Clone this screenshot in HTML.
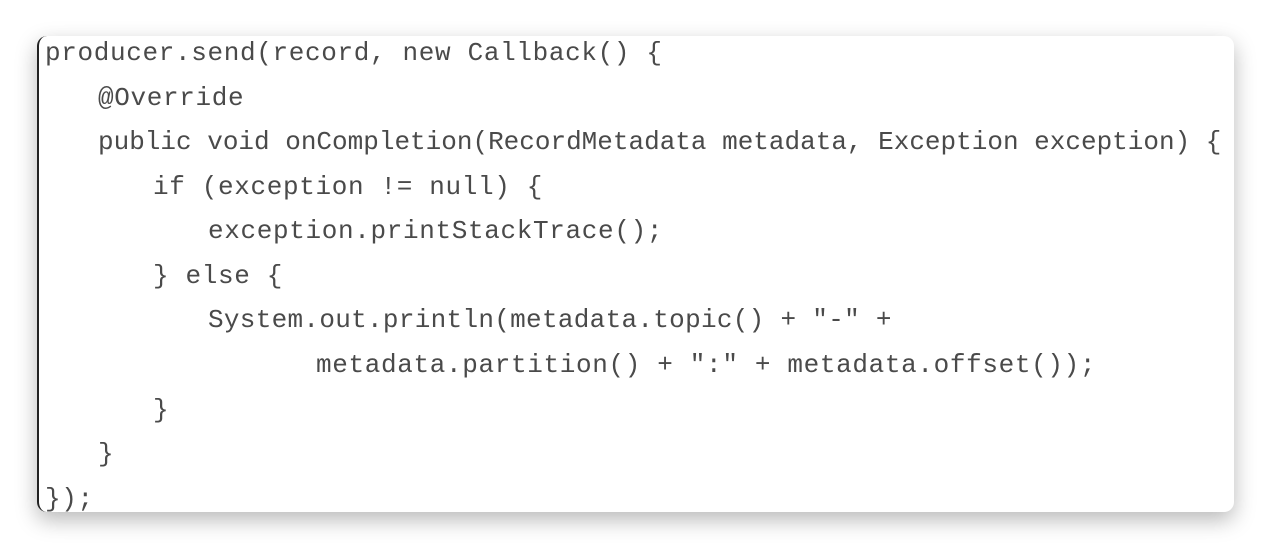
<!DOCTYPE html>
<html><head><style>
html,body{margin:0;padding:0;background:#fff;}
body{width:1268px;height:548px;position:relative;overflow:hidden;}
.card{position:absolute;left:37px;top:36px;width:1195px;height:476px;background:#fff;border-radius:10px;box-shadow:0 8px 22px rgba(0,0,0,0.28);border-left:2px solid #222;}
.l{position:absolute;font-family:"Liberation Mono",monospace;font-size:26px;color:#4a4a4a;white-space:pre;line-height:30px;letter-spacing:0.65px;}
</style></head><body>
<div class="card"></div>
<div class="l" style="left:45px;top:38px">producer.send(record, new Callback() {</div>
<div class="l" style="left:98px;top:83px">@Override</div>
<div class="l" style="left:98px;top:127px;letter-spacing:0">public void onCompletion(RecordMetadata metadata, Exception exception) {</div>
<div class="l" style="left:153px;top:172px">if (exception != null) {</div>
<div class="l" style="left:208px;top:216px">exception.printStackTrace();</div>
<div class="l" style="left:153px;top:261px">} else {</div>
<div class="l" style="left:208px;top:305px;letter-spacing:0.3px">System.out.println(metadata.topic() + "-" +</div>
<div class="l" style="left:316px;top:350px">metadata.partition() + ":" + metadata.offset());</div>
<div class="l" style="left:153px;top:395px">}</div>
<div class="l" style="left:98px;top:439px">}</div>
<div class="l" style="left:45px;top:484px">});</div>
</body></html>
